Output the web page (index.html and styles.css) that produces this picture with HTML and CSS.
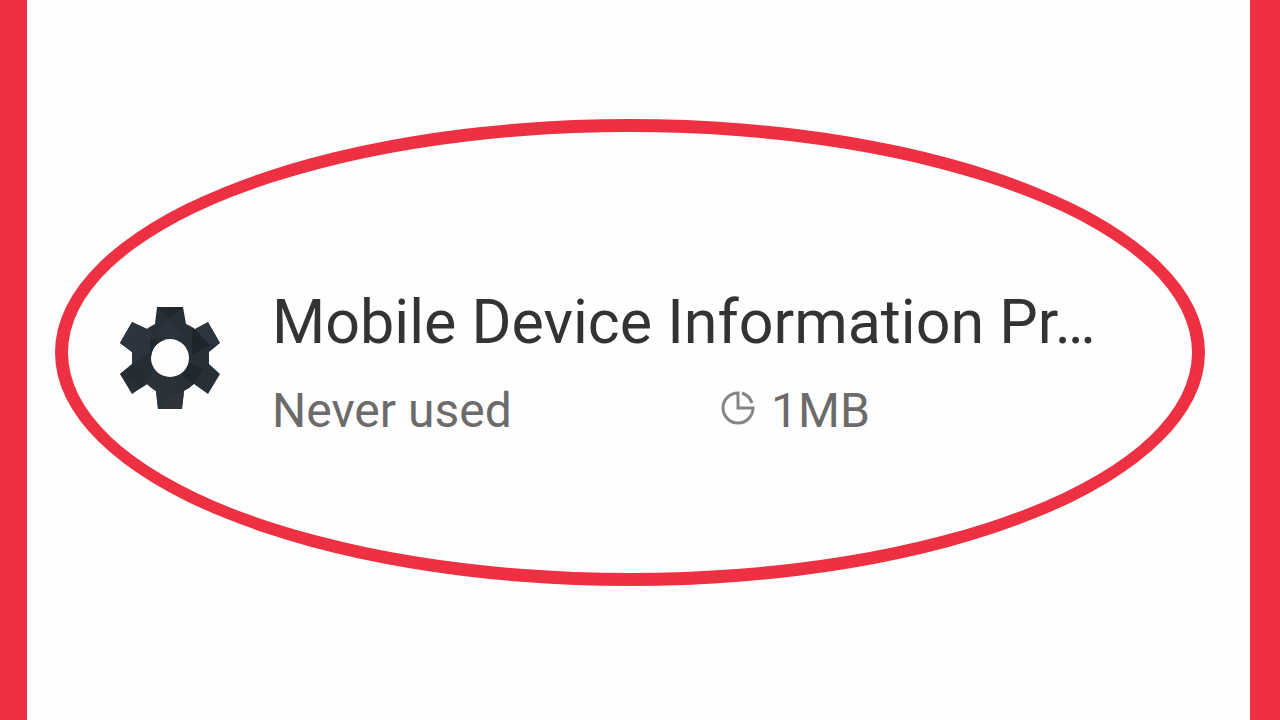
FILE: index.html
```
<!DOCTYPE html>
<html lang="en">
<head>
<meta charset="utf-8">
<meta name="viewport" content="width=device-width, initial-scale=1">
<title>Mobile Device Information</title>
<link rel="stylesheet" href="styles.css">
</head>
<body>
<main class="frame">
  <section class="oval">
    <svg class="app-icon" viewBox="0 0 102 102" aria-hidden="true">
      <defs>
        <clipPath id="gear">
          <path clip-rule="evenodd" d="M38 0H64L67 17Q72 19 76 22L89 15L101 36L90 45V57L101 67L89 87L75 77Q70 82 65 84L63 102H39L37 84Q32 81 28 77L13 87L1 67L13 57V45L1 36L13 15L28 22Q32 19 36 17ZM51 32A19 19 0 1 0 51 70A19 19 0 1 0 51 32Z"/>
        </clipPath>
      </defs>
      <g clip-path="url(#gear)">
        <path fill="#272f37" d="M0 0H102V102H0Z"/>
        <path fill="#2c353e" d="M13 15L32 19L31 44L13 57L0 36Z"/>
        <path fill="#20272f" d="M38 0H64L51 12ZM31 32L51 33L31 50Z"/>
        <path fill="#2b333c" d="M51 12L66 30L51 33L36 28Z"/>
        <path fill="#1d242c" d="M73 20L91 38L73 48Z"/>
        <path fill="#242c34" d="M12 58L29 49L33 66L22 80L0 67Z"/>
        <path fill="#2d363f" d="M76 22L89 15L101 36L91 38Z"/>
        <path fill="#2a3138" d="M33 66L51 71L64 68L51 87L39 102L22 80Z"/>
        <path fill="#20272e" d="M64 68L72 56L84 62L75 77Z"/>
        <path fill="#2e3439" d="M51 87L66 85L63 102H39Z"/>
      </g>
    </svg>
    <div class="details">
      <h1 class="name">Mobile Device Information Pr…</h1>
      <div class="meta">
        <span class="usage">Never used</span>
        <span class="size">
          <svg class="pie" viewBox="0 0 34 34" aria-hidden="true">
            <path d="M17 2A15 15 0 1 0 32 17H17ZM21 2A16 16 0 0 1 31 12"/>
          </svg>
          <span>1MB</span>
        </span>
      </div>
    </div>
  </section>
</main>
</body>
</html>
```
FILE: styles.css
```
* {
  box-sizing: border-box;
}

body {
  margin: 0;
  background: #fefefe;
  font-family: Roboto, "Liberation Sans", sans-serif;
}

.frame {
  display: flex;
  align-items: center;
  min-height: 100vh;
  padding: 0 45px 15px 28px;
  border: solid #ee3043;
  border-width: 0 30px 0 27px;
}

.oval {
  display: flex;
  flex: 1;
  align-items: center;
  gap: 51px;
  min-width: 0;
  min-height: 467px;
  padding: 20px 22px 0 51px;
  border: 13px solid #ee3043;
  border-radius: 50%;
}

.app-icon {
  flex: none;
  width: 102px;
  height: 102px;
  margin-bottom: 10px;
}

.details {
  flex: 1;
  min-width: 0;
}

.name {
  margin: 0 0 26px;
  overflow: hidden;
  color: #333;
  font-size: 61px;
  font-weight: 400;
  line-height: 70px;
  text-overflow: ellipsis;
  white-space: nowrap;
}

.meta {
  display: grid;
  grid-template-columns: 1fr 1fr;
  color: #6b6b6b;
  font-size: 48px;
  line-height: 56px;
}

.size {
  display: flex;
  align-items: center;
  gap: 16px;
}

.pie {
  width: 34px;
  height: 34px;
  margin-bottom: 6px;
  fill: none;
  stroke: #858585;
  stroke-width: 3;
}
```
